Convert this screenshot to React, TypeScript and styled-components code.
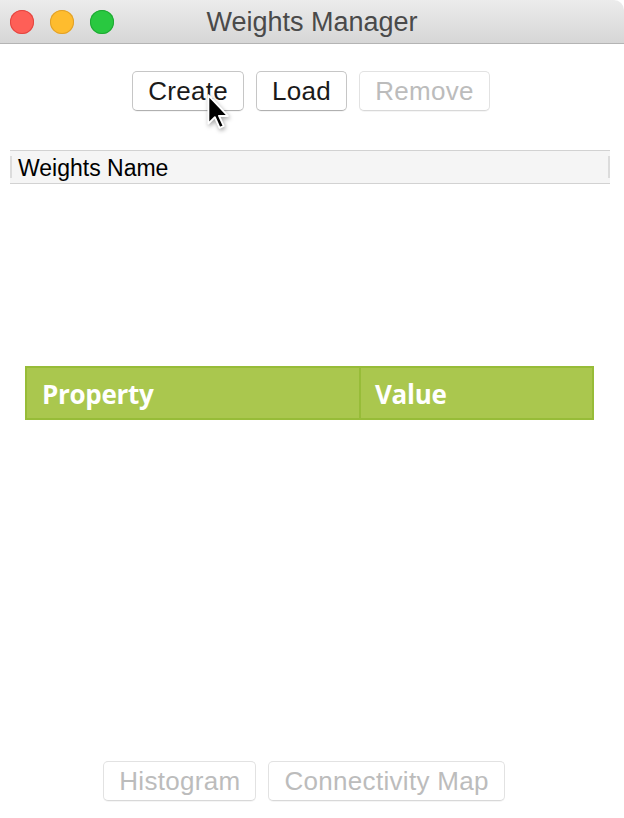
import React from "react";
import styled, { createGlobalStyle } from "styled-components";

const Global = createGlobalStyle`
  html, body { margin: 0; padding: 0; background: #fff; }
  body { font-family: "Liberation Sans", Arial, sans-serif; }
`;

const Window = styled.div`
  width: 624px;
  height: 818px;
  display: flex;
  flex-direction: column;
  background: #fff;
  position: relative;
  overflow: hidden;
`;

const TitleBar = styled.div`
  height: 43px;
  flex: none;
  display: flex;
  align-items: center;
  position: relative;
  background: linear-gradient(#ececec, #d6d6d6);
  border-bottom: 1px solid #b4b4b4;
  border-top-right-radius: 10px;
`;

const Lights = styled.div`
  display: flex;
  gap: 16px;
  padding-left: 10px;
`;

const Light = styled.span<{ $fill: string; $edge: string }>`
  width: 24px;
  height: 24px;
  border-radius: 50%;
  background: ${(p) => p.$fill};
  box-shadow: inset 0 0 0 1px ${(p) => p.$edge};
`;

const Title = styled.div`
  position: absolute;
  left: 0;
  right: 0;
  text-align: center;
  font-size: 27px;
  color: #4a4a4a;
  pointer-events: none;
  transform: translate(0px, 1px);
`;

const ButtonRow = styled.div<{ $top: number; $shift: number }>`
  display: flex;
  justify-content: center;
  gap: 12px;
  padding-top: ${(p) => p.$top}px;
  transform: translateX(${(p) => p.$shift}px);
`;

const Button = styled.button<{ $disabled?: boolean }>`
  height: 40px;
  padding: 0 15px;
  background: #fff;
  border: 1px solid ${(p) => (p.$disabled ? "#e2e2e2" : "#c6c6c6")};
  border-bottom-color: ${(p) => (p.$disabled ? "#d8d8d8" : "#b0b0b0")};
  border-radius: 5px;
  font-family: "Liberation Sans", Arial, sans-serif;
  font-size: 26px;
  letter-spacing: 0.3px;
  color: ${(p) => (p.$disabled ? "#bcbcbc" : "#1a1a1a")};
  box-shadow: 0 1px 0 rgba(0, 0, 0, 0.04);
`;

const ListHeader = styled.div`
  margin: 39px 14px 0 10px;
  height: 32px;
  display: flex;
  align-items: center;
  background: #f5f5f5;
  border-top: 1px solid #d2d2d2;
  border-bottom: 1px solid #d2d2d2;
  position: relative;
`;

const ColEdge = styled.span<{ $side: "left" | "right" }>`
  position: absolute;
  top: 5px;
  bottom: 5px;
  ${(p) => p.$side}: 0;
  width: 2px;
  background: #dcdcdc;
`;

const HeaderText = styled.span`
  padding-left: 8px;
  padding-top: 3px;
  font-size: 23px;
  color: #000;
`;

const PropTable = styled.div`
  margin: 182px 30px 0 25px;
  height: 50px;
  display: grid;
  grid-template-columns: 332px 1fr;
  background: #aac74e;
  border: 2px solid #97bc38;
`;

const PropCell = styled.div<{ $divider?: boolean }>`
  display: flex;
  align-items: center;
  padding-top: 2px;
  padding-left: ${(p) => (p.$divider ? "14px" : "15px")};
  border-left: ${(p) => (p.$divider ? "2px solid #97bc38" : "none")};
  font-family: "Open Sans", "Noto Sans", sans-serif;
  font-weight: 700;
  font-size: 26px;
  letter-spacing: -0.3px;
  color: #fff;
`;

const Bottom = styled.div`
  margin-top: auto;
  padding-bottom: 17px;
`;

const Cursor = styled.svg`
  position: absolute;
  left: 206px;
  top: 94px;
  filter: drop-shadow(1px 2px 2px rgba(0, 0, 0, 0.35));
`;

export default function App() {
  return (
    <Window>
      <Global />
      <TitleBar>
        <Lights>
          <Light $fill="#fe5f57" $edge="#e24640" />
          <Light $fill="#febc2e" $edge="#e0a02a" />
          <Light $fill="#29c840" $edge="#1fa833" />
        </Lights>
        <Title>Weights Manager</Title>
      </TitleBar>
      <ButtonRow $top={27} $shift={-1}>
        <Button>Create</Button>
        <Button>Load</Button>
        <Button $disabled>Remove</Button>
      </ButtonRow>
      <ListHeader>
        <ColEdge $side="left" />
        <HeaderText>Weights Name</HeaderText>
        <ColEdge $side="right" />
      </ListHeader>
      <PropTable>
        <PropCell>Property</PropCell>
        <PropCell $divider>Value</PropCell>
      </PropTable>
      <Bottom>
        <ButtonRow $top={0} $shift={-8}>
          <Button $disabled>Histogram</Button>
          <Button $disabled>Connectivity Map</Button>
        </ButtonRow>
      </Bottom>
      <Cursor width="26" height="38" viewBox="0 0 22 32">
        <path
          d="M2 1 L2 25 L7.5 19.5 L11.5 28.5 L15 27 L11 18.5 L18.5 18.5 Z"
          fill="#000"
          stroke="#fff"
          strokeWidth="1.6"
          strokeLinejoin="round"
        />
      </Cursor>
    </Window>
  );
}
